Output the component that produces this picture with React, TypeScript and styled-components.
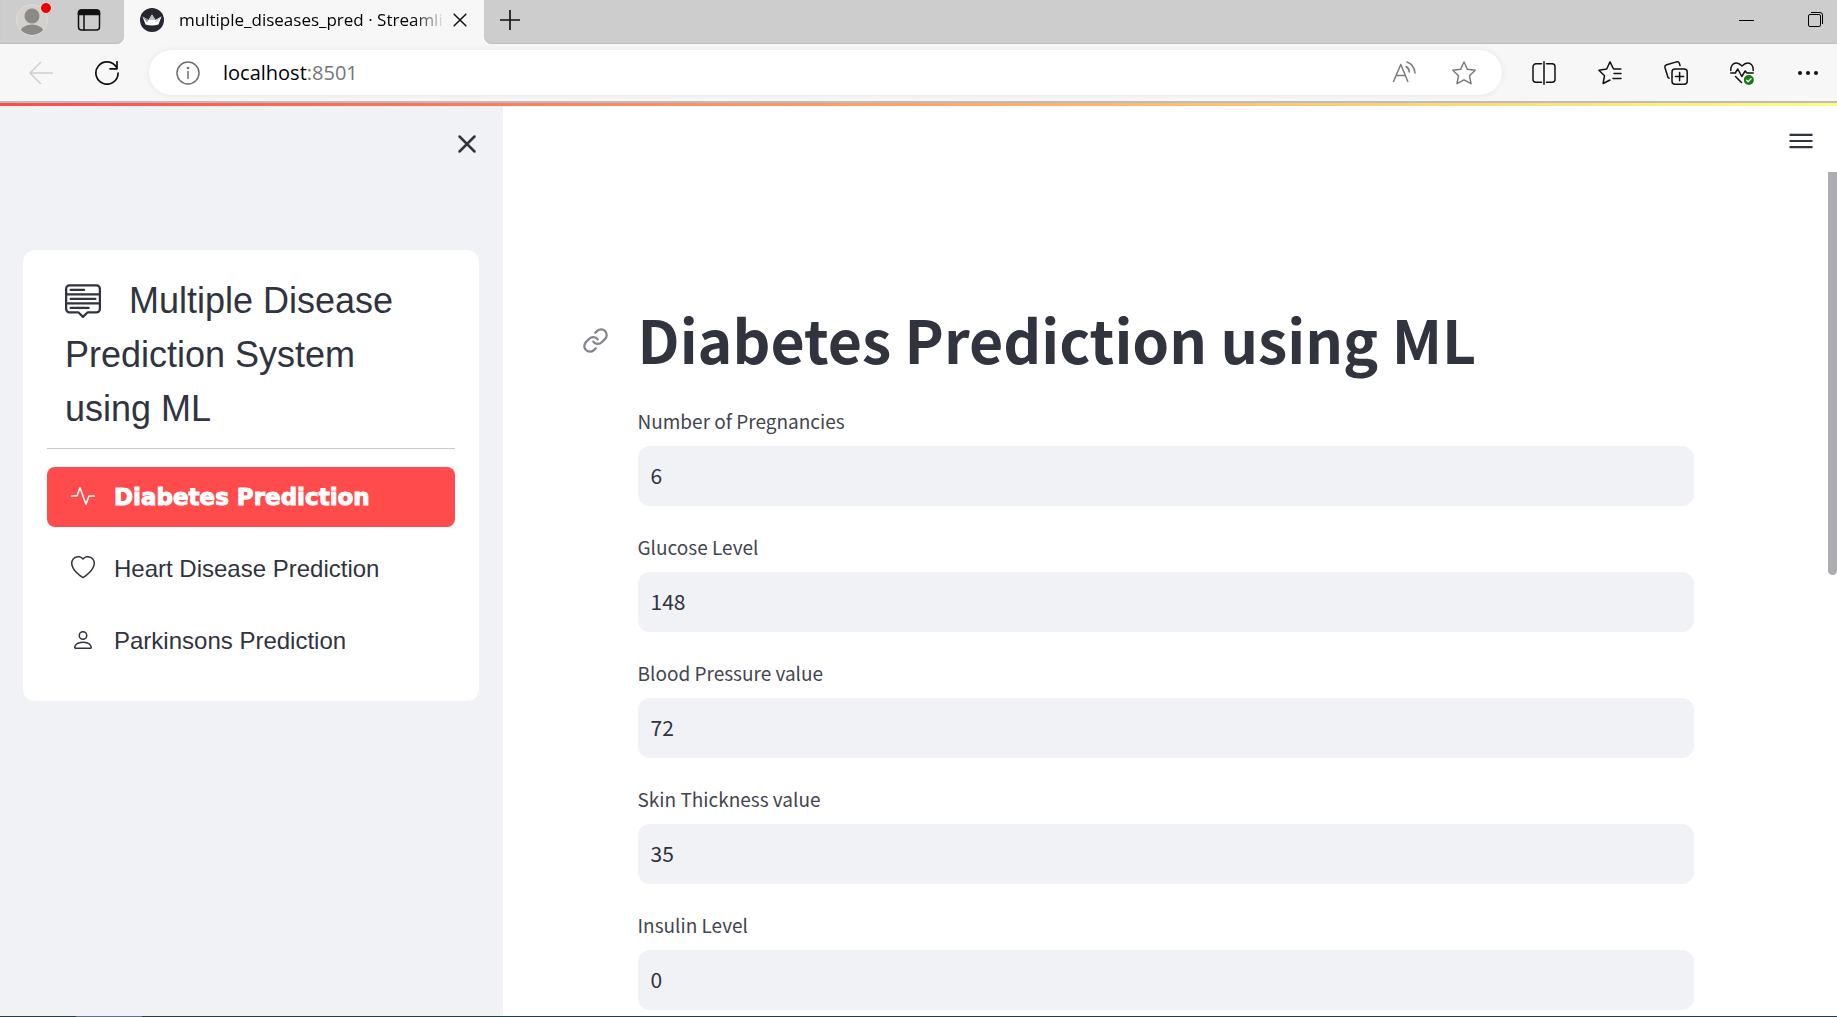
import React, { useState } from 'react';
import styled, { createGlobalStyle, css } from 'styled-components';
import { BsMenuUp, BsActivity, BsHeart, BsPerson } from 'react-icons/bs';
import { FiLink, FiX } from 'react-icons/fi';

const ink = '#31333f';
const panel = '#f0f2f6';
const chrome = '#f7f7f7';
const strip = '#cdcdcd';
const sourceSans = '"Source Sans Pro", "Noto Sans CJK SC", sans-serif';
const arial = '"Liberation Sans", Arial, sans-serif';
const segoe = '"Segoe UI", "Open Sans", sans-serif';

const GlobalStyle = createGlobalStyle`
  *, *::before, *::after { box-sizing: border-box; }
  body { margin: 0; background: #fff; color: ${ink}; font-family: ${sourceSans}; }
  svg { display: block; flex: none; }
`;

const Window = styled.div`
  display: flex;
  flex-direction: column;
  height: 100vh;
  overflow: hidden;
`;

/* ---------- browser chrome ---------- */

const TabStrip = styled.div`
  display: flex;
  flex: none;
  height: 44px;
  background: ${chrome};
`;

const StripPart = styled.div<{ $side: 'left' | 'right' }>`
  display: flex;
  align-items: center;
  background: ${strip};
  padding-bottom: 4px;
  box-shadow: inset 0 -1px 1px #bebebe;
  ${({ $side }) =>
    $side === 'left'
      ? css`
          flex: none;
          width: 124px;
          gap: 25px;
          padding-left: 16px;
          border-radius: 0 0 8px 0;
        `
      : css`
          flex: 1;
          justify-content: space-between;
          padding-left: 10px;
          border-radius: 0 0 0 8px;
        `}
`;

const IconButton = styled.button<{ $width?: number; $color?: string }>`
  display: flex;
  flex: none;
  align-items: center;
  justify-content: center;
  width: ${({ $width }) => $width ?? 48}px;
  height: 36px;
  padding: 0;
  border: 0;
  background: none;
  color: ${({ $color }) => $color ?? '#111'};
  cursor: pointer;
`;

const WindowControls = styled.div`
  display: flex;
  gap: 28px;
`;

const Tab = styled.div`
  display: flex;
  flex: none;
  align-items: center;
  width: 360px;
  padding: 0 9px 4px 16px;
`;

const TabTitle = styled.span`
  flex: 1;
  min-width: 0;
  margin-left: 15px;
  overflow: hidden;
  white-space: nowrap;
  font: 17px/24px ${segoe};
  color: #000;
  mask-image: linear-gradient(90deg, #000 88%, transparent 100%);
`;

const Toolbar = styled.div`
  display: flex;
  flex: none;
  align-items: center;
  height: 59px;
  padding: 0 5px 0 17px;
  background: ${chrome};
  border-bottom: 2px solid #bcbcbc;
`;

const NavButtons = styled.div`
  display: flex;
  gap: 18px;
  margin-right: 18px;
`;

const AddressBar = styled.div`
  display: flex;
  flex: 1;
  align-items: center;
  height: 45px;
  padding: 0 14px 0 15px;
  border-radius: 23px;
  background: #fff;
  box-shadow: 0 0 6px rgba(0, 0, 0, 0.08);
`;

const Address = styled.span`
  flex: 1;
  margin-left: 11px;
  font: 20px/28px ${segoe};
  color: #000;
`;

const Port = styled.span`
  color: #757575;
`;

const AddressTools = styled.div`
  display: flex;
  gap: 12px;
`;

const ToolbarActions = styled.div`
  display: flex;
  gap: 18px;
  margin-left: 18px;
`;

/* ---------- page ---------- */

const Decoration = styled.div`
  flex: none;
  height: 3px;
  background: linear-gradient(90deg, #ff4b4b, #fffd80);
`;

const Page = styled.div`
  display: flex;
  flex: 1;
  min-height: 0;
`;

const Sidebar = styled.aside`
  flex: none;
  width: 503px;
  padding: 20px 24px 0 23px;
  background: ${panel};
`;

const SidebarHeader = styled.div`
  display: flex;
  justify-content: flex-end;
  height: 124px;
`;

const MenuCard = styled.nav`
  padding: 24px 24px 30px;
  border-radius: 12px;
  background: #fff;
  font-family: ${arial};
`;

const MenuTitle = styled.div`
  padding: 0 18px 12px;
  border-bottom: 1px solid #c9c9cb;
  font-size: 36px;
  line-height: 54px;

  svg {
    display: inline-block;
    margin-right: 28px;
    vertical-align: -5px;
  }
`;

const MenuList = styled.ul`
  display: flex;
  flex-direction: column;
  gap: 12px;
  margin: 18px 0 0;
  padding: 0;
  list-style: none;
`;

const MenuLink = styled.a<{ $active: boolean }>`
  display: flex;
  align-items: center;
  gap: 19px;
  height: 60px;
  padding: 0 24px;
  border-radius: 8px;
  font-size: 24px;
  line-height: 36px;
  text-decoration: none;
  white-space: nowrap;
  color: ${ink};

  svg {
    margin-bottom: 2px;
  }

  ${({ $active }) =>
    $active &&
    css`
      background: #ff4b4b;
      color: #fff;
      font-family: 'Arial Black', 'DejaVu Sans', ${arial};
      font-size: 23px;
      font-weight: 900;
      -webkit-text-stroke: 1px #fff;
    `}
`;

const Main = styled.main`
  display: flex;
  flex: 1;
  flex-direction: column;
  min-width: 0;
  background: #fff;
`;

const MainHeader = styled.header`
  display: flex;
  flex: none;
  justify-content: flex-end;
  height: 66px;
  padding: 17px 12px 0 0;
`;

const ScrollArea = styled.div`
  display: flex;
  flex: 1;
  min-height: 0;
  overflow: hidden;
`;

const Content = styled.div`
  flex: 1;
  min-width: 0;
  padding-top: 131px;
`;

const Column = styled.div`
  max-width: 1104px;
  margin: 0 auto;
  padding: 0 24px;
`;

const ScrollThumb = styled.div`
  flex: none;
  width: 9px;
  height: 403px;
  border-radius: 0 0 5px 5px;
  background: #adacb1;
`;

const HeadingRow = styled.div`
  display: flex;
  align-items: center;
  gap: 29px;
  margin: 0 0 29px -56px;
`;

const HeadingLink = styled.a`
  padding-top: 2px;
  color: #83858c;
`;

const Heading = styled.h1`
  margin: 0;
  font-size: 59px;
  font-weight: 700;
  line-height: 72px;
  white-space: nowrap;
`;

const Form = styled.form`
  display: flex;
  flex-direction: column;
  gap: 24px;
`;

const Field = styled.div`
  display: flex;
  flex-direction: column;
  gap: 8px;
`;

const Label = styled.label`
  font-size: 19px;
  line-height: 34px;
  color: #43454f;
`;

const TextInput = styled.input`
  width: 100%;
  height: 60px;
  padding: 0 13px 2px;
  border: 0;
  border-radius: 12px;
  outline: 0;
  background: ${panel};
  color: ${ink};
  font-family: ${sourceSans};
  font-size: 21px;
`;

const TaskbarEdge = styled.div`
  flex: none;
  height: 1px;
  background: linear-gradient(90deg, #1f3f4d 76px, #5d7580 76px 142px, #1f3f4d 142px);
`;

/* ---------- icons ---------- */

type GlyphProps = { size?: number; weight?: number; children: React.ReactNode };

const Glyph = ({ size = 24, weight = 1.5, children }: GlyphProps) => (
  <svg
    width={size}
    height={size}
    viewBox="0 0 24 24"
    fill="none"
    stroke="currentColor"
    strokeWidth={weight}
    strokeLinecap="round"
    strokeLinejoin="round"
    aria-hidden="true"
  >
    {children}
  </svg>
);

const Avatar = () => (
  <svg width="36" height="36" viewBox="0 0 36 36" aria-hidden="true">
    <clipPath id="face">
      <circle cx="16" cy="18" r="15" />
    </clipPath>
    <circle cx="16" cy="18" r="15.500" fill="#d3d1ce" stroke="#dedcda" />
    <g clipPath="url(#face)" fill="#8c8987">
      <circle cx="16" cy="14" r="7.500" />
      <ellipse cx="16" cy="32" rx="12.500" ry="9.500" />
    </g>
    <circle cx="30" cy="6" r="5.500" fill="#e60000" stroke="#f5e9e9" strokeWidth="1" />
  </svg>
);

const TabActions = () => (
  <Glyph>
    <rect x="1.500" y="2" width="21" height="20" rx="3" />
    <path d="M1.500 6.500V5a3 3 0 0 1 3-3h15a3 3 0 0 1 3 3v1.500z" fill="currentColor" />
    <path d="M7 7v15" />
  </Glyph>
);

const Favicon = () => (
  <svg width="24" height="24" viewBox="0 0 24 24" aria-hidden="true">
    <circle cx="12" cy="12" r="12" fill="#262730" />
    <path d="M2.500 8.500 8.500 12 12 6.500 15.500 12 21.500 8.500 18.500 16.500Q12 18.500 5.500 16.500Z" fill="#fff" />
    <path d="M12 6.500 15.500 12 8.500 12Z" fill="#bdbdc2" />
    <path d="M2.500 8.500 8.500 12 7 14.500Z" fill="#8e8f96" />
    <path d="M21.500 8.500 15.500 12 17 14.500Z" fill="#d5d5d9" />
  </svg>
);

const ReadAloud = () => (
  <Glyph weight={1.5}>
    <path d="M1.500 20.500 8.800 3.500l7 17M4 14.500h9.300" />
    <path d="M14 5.500c2 1 3.200 3 3.300 5.500M15 1c4.500 1.500 7.500 5.500 8 11" />
  </Glyph>
);

const StarOutline = () => (
  <Glyph weight={1.5}>
    <path d="M12 1l3.400 7.200 7.800 1-5.700 5.500 1.500 8-7-3.900-7 3.900 1.500-8L.8 9.200l7.800-1z" />
  </Glyph>
);

const SplitScreen = () => (
  <Glyph>
    <path d="M9.500 2.800H4A3 3 0 0 0 1 5.800v12.400a3 3 0 0 0 3 3h5.500M14.500 2.800H20a3 3 0 0 1 3 3v12.400a3 3 0 0 1-3 3h-5.500M12 .8v22.400" />
  </Glyph>
);

const Favorites = () => (
  <Glyph>
    <path d="M22.800 8H15.600L12 .9 8.700 8 .9 9.200l5.600 5.500-1.400 7.800L12 19" />
    <path d="M16 12.500h7M15 17.500h8" />
  </Glyph>
);

const Collections = () => (
  <Glyph>
    <rect x="8" y="8" width="15.200" height="15.200" rx="3" />
    <path d="M15.600 11.500v8.200M11.500 15.600h8.200M5 17.200 4 16.500 1 6.800a2.500 2.500 0 0 1 1.700-3L12.500.9a2.500 2.500 0 0 1 3 1.700L16 4.600" />
  </Glyph>
);

const Essentials = () => (
  <Glyph>
    <path d="M.8 9.500C.5 4.500 3.200 2 6.300 2 9 2 10.500 3.500 12 5c1.500-1.500 3-3 5.700-3 3.100 0 5.800 2.500 5.500 7.500" />
    <path d="M.8 12h4.500l2.500-4 4 7.500 3.400-5.500 1.800 2h6.200M5.500 15.500l6 6" />
    <circle cx="18.800" cy="19" r="5" fill="#107c10" stroke="none" />
    <path d="M16.700 19.200l1.500 1.500 2.800-3" stroke="#fff" />
  </Glyph>
);

const BackArrow = () => (
  <Glyph weight={1.5}>
    <path d="M23.500 12H1M11.500 1.500 1 12l10.500 10.500" />
  </Glyph>
);

const Reload = () => (
  <Glyph weight={1.7}>
    <path d="M23.100 12A11.100 11.100 0 1 1 21.500 6.300M22 .8v7h-7" />
  </Glyph>
);

const Info = () => (
  <Glyph weight={1.5}>
    <circle cx="12" cy="12" r="11" />
    <path d="M12 10.500v7" />
    <circle cx="12" cy="7" r=".6" fill="currentColor" />
  </Glyph>
);

const Dots = () => (
  <Glyph>
    <g fill="currentColor" stroke="none">
      <circle cx="4" cy="12" r="2" />
      <circle cx="12" cy="12" r="2" />
      <circle cx="20" cy="12" r="2" />
    </g>
  </Glyph>
);

const Hamburger = () => (
  <svg width="24" height="18" viewBox="0 0 24 18" fill="currentColor" aria-hidden="true">
    <path d="M.5 1.700h23v2.200h-23zM.5 7.900h23v2.200h-23zM.5 14.100h23v2.200h-23z" />
  </svg>
);

/* ---------- data ---------- */

const menu = [
  { label: 'Diabetes Prediction', Icon: BsActivity },
  { label: 'Heart Disease Prediction', Icon: BsHeart },
  { label: 'Parkinsons Prediction', Icon: BsPerson },
];

const fields = [
  { id: 'pregnancies', label: 'Number of Pregnancies', value: '6' },
  { id: 'glucose', label: 'Glucose Level', value: '148' },
  { id: 'pressure', label: 'Blood Pressure value', value: '72' },
  { id: 'skin', label: 'Skin Thickness value', value: '35' },
  { id: 'insulin', label: 'Insulin Level', value: '0' },
];

export default function App() {
  const [active, setActive] = useState(0);

  return (
    <Window>
      <GlobalStyle />
      <TabStrip>
        <StripPart $side="left">
          <IconButton $width={36} aria-label="Profile">
            <Avatar />
          </IconButton>
          <IconButton $width={24} aria-label="Tab actions">
            <TabActions />
          </IconButton>
        </StripPart>
        <Tab>
          <Favicon />
          <TabTitle>multiple_diseases_pred · Streamli</TabTitle>
          <IconButton $width={30} aria-label="Close tab">
            <Glyph size={14} weight={2.6}>
              <path d="M2 2l20 20M22 2 2 22" />
            </Glyph>
          </IconButton>
        </Tab>
        <StripPart $side="right">
          <IconButton $width={32} aria-label="New tab">
            <Glyph size={20} weight={2}>
              <path d="M12 0v24M0 12h24" />
            </Glyph>
          </IconButton>
          <WindowControls>
            <IconButton $width={42} aria-label="Minimize">
              <svg width="15" height="1" viewBox="0 0 15 1" aria-hidden="true">
                <path d="M0 0h15v1H0z" fill="#000" />
              </svg>
            </IconButton>
            <IconButton $width={42} aria-label="Restore">
              <svg width="16" height="16" viewBox="0 0 16 16" fill="none" stroke="#000" aria-hidden="true">
                <rect x=".5" y="2.500" width="12" height="12" rx="1.500" />
                <path d="M3 .5H12a2.500 2.500 0 0 1 2.500 2.500v9" />
              </svg>
            </IconButton>
          </WindowControls>
        </StripPart>
      </TabStrip>

      <Toolbar>
        <NavButtons>
          <IconButton aria-label="Back" $color="#cfcfcf">
            <BackArrow />
          </IconButton>
          <IconButton aria-label="Refresh">
            <Reload />
          </IconButton>
        </NavButtons>
        <AddressBar>
          <IconButton aria-label="Site information" $color="#6e6e6e">
            <Info />
          </IconButton>
          <Address>
            localhost<Port>:8501</Port>
          </Address>
          <AddressTools>
            <IconButton aria-label="Read aloud" $color="#7a7a7a">
              <ReadAloud />
            </IconButton>
            <IconButton aria-label="Add to favorites" $color="#7a7a7a">
              <StarOutline />
            </IconButton>
          </AddressTools>
        </AddressBar>
        <ToolbarActions>
          <IconButton aria-label="Split screen">
            <SplitScreen />
          </IconButton>
          <IconButton aria-label="Favorites">
            <Favorites />
          </IconButton>
          <IconButton aria-label="Collections">
            <Collections />
          </IconButton>
          <IconButton aria-label="Browser essentials">
            <Essentials />
          </IconButton>
          <IconButton aria-label="Settings and more">
            <Dots />
          </IconButton>
        </ToolbarActions>
      </Toolbar>

      <Decoration />
      <Page>
        <Sidebar>
          <SidebarHeader>
            <IconButton $width={24} $color={ink} aria-label="Close sidebar">
              <FiX size={30} />
            </IconButton>
          </SidebarHeader>
          <MenuCard>
            <MenuTitle>
              <BsMenuUp size={36} />
              Multiple Disease Prediction System using ML
            </MenuTitle>
            <MenuList>
              {menu.map(({ label, Icon }, i) => (
                <li key={label}>
                  <MenuLink
                    href="#"
                    $active={i === active}
                    aria-current={i === active ? 'page' : undefined}
                    onClick={(e) => {
                      e.preventDefault();
                      setActive(i);
                    }}
                  >
                    <Icon size={24} />
                    {label}
                  </MenuLink>
                </li>
              ))}
            </MenuList>
          </MenuCard>
        </Sidebar>

        <Main>
          <MainHeader>
            <IconButton $width={48} $color={ink} aria-label="Main menu">
              <Hamburger />
            </IconButton>
          </MainHeader>
          <ScrollArea>
            <Content>
              <Column>
                <HeadingRow>
                  <HeadingLink href="#diabetes-prediction-using-ml" aria-label="Link to heading">
                    <FiLink size={27} />
                  </HeadingLink>
                  <Heading id="diabetes-prediction-using-ml">Diabetes Prediction using ML</Heading>
                </HeadingRow>
                <Form>
                  {fields.map(({ id, label, value }) => (
                    <Field key={id}>
                      <Label htmlFor={id}>{label}</Label>
                      <TextInput id={id} type="text" defaultValue={value} />
                    </Field>
                  ))}
                </Form>
              </Column>
            </Content>
            <ScrollThumb />
          </ScrollArea>
        </Main>
      </Page>
      <TaskbarEdge />
    </Window>
  );
}
